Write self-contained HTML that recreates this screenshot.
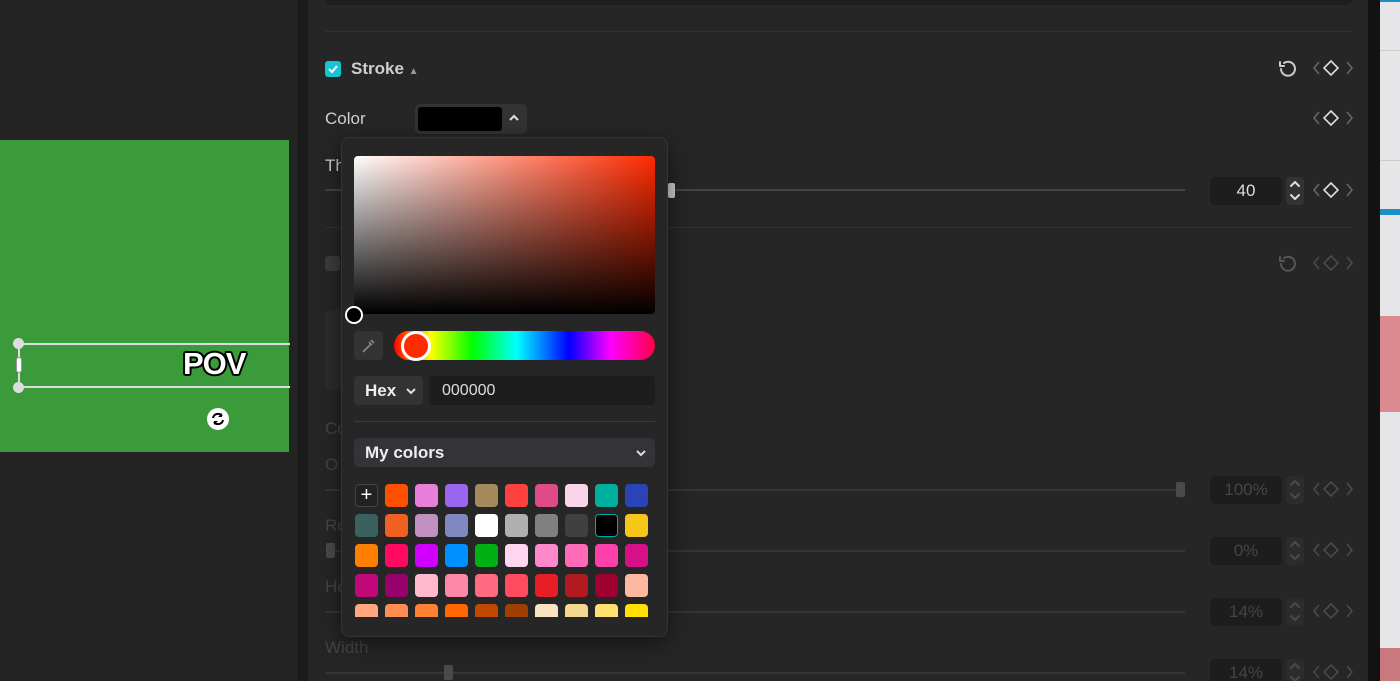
<!DOCTYPE html>
<html><head><meta charset="utf-8"><style>
*{margin:0;padding:0;box-sizing:border-box}
html{width:1400px;height:681px;overflow:hidden}
body{width:1400px;height:681px;overflow:hidden;background:#232323;font-family:"Liberation Sans",sans-serif;position:relative}
.a{position:absolute}
.t{color:#cfcfcf;font-size:17px}
.f{color:#454545;font-size:17px}
.inp{position:absolute;width:72px;height:28px;background:#1d1d1d;border-radius:5px;text-align:center;line-height:28px;font-size:17px}
.spin{position:absolute;width:18px;height:28px;background:#333;border-radius:4px}
.sw{position:absolute;width:23px;height:23px;border-radius:4px}
</style></head><body>
<div class="a" style="left:0;top:140px;width:289px;height:312px;background:#3b9a39"></div>
<div class="a" style="left:18px;top:343px;width:272px;height:2px;background:#ddd"></div>
<div class="a" style="left:18px;top:386px;width:272px;height:2px;background:#ddd"></div>
<div class="a" style="left:18px;top:344px;width:2px;height:43px;background:#ddd"></div>
<div class="a" style="left:13px;top:338px;width:11px;height:11px;border-radius:50%;background:#ddd"></div>
<div class="a" style="left:13px;top:382px;width:11px;height:11px;border-radius:50%;background:#ddd"></div>
<div class="a" style="left:16px;top:357px;width:6px;height:16px;border-radius:3px;background:#fff;border:1px solid #999"></div>
<div class="a" style="left:183px;top:346px;font-size:31px;font-weight:bold;color:#fff;letter-spacing:-1px;text-shadow:-2px 0 #000,2px 0 #000,0 -2px #000,0 2px #000,-1.5px -1.5px #000,1.5px 1.5px #000,-1.5px 1.5px #000,1.5px -1.5px #000">POV</div>
<div class="a" style="left:207px;top:408px;width:22px;height:22px;border-radius:50%;background:#fff"><svg width="22" height="22" viewBox="0 0 22 22"><path d="M6 10a5 5 0 0 1 9-2M16 12a5 5 0 0 1-9 2" stroke="#000" stroke-width="2" fill="none"/><path d="M15 5v4h-4zM7 17v-4h4z" fill="#000"/></svg></div>
<div class="a" style="left:298px;top:0;width:10px;height:681px;background:#1b1b1b"></div>
<div class="a" style="left:308px;top:0;width:1060px;height:681px;background:#262626"></div>
<div class="a" style="left:1368px;top:0;width:12px;height:681px;background:#121212"></div>
<div class="a" style="left:1380px;top:0;width:20px;height:681px;background:#e6e6e8"></div>
<div class="a" style="left:1380px;top:0;width:20px;height:2px;background:#1a8fc8"></div>
<div class="a" style="left:1380px;top:50px;width:20px;height:1px;background:#ccc"></div>
<div class="a" style="left:1380px;top:160px;width:20px;height:1px;background:#ccc"></div>
<div class="a" style="left:1380px;top:209px;width:20px;height:6px;background:#1a8fc8"></div>
<div class="a" style="left:1380px;top:316px;width:20px;height:96px;background:#dc8a90"></div>
<div class="a" style="left:1380px;top:648px;width:20px;height:33px;background:#c9787e"></div>
<div class="a" style="left:325px;top:0;width:1027px;height:5px;background:#1e1e1e;border-radius:0 0 6px 6px"></div>
<div class="a" style="left:325px;top:31px;width:1027px;height:1px;background:#323232"></div>
<div class="a" style="left:325px;top:61px;width:16px;height:16px;border-radius:3px;background:#16c4d4"><svg width="16" height="16"><path d="M4 8l3 3 5-6" stroke="#fff" stroke-width="2" fill="none"/></svg></div>
<div class="a t" style="left:351px;top:59px;font-weight:bold">Stroke <span style="font-size:10px;color:#999">▲</span></div>
<div class="a t" style="left:325px;top:109px">Color</div>
<div class="a" style="left:415px;top:104px;width:112px;height:30px;background:#333;border-radius:5px"></div>
<div class="a" style="left:418px;top:107px;width:84px;height:24px;background:#000;border-radius:3px"></div>
<svg class="a" style="left:508px;top:113px" width="12" height="10"><path d="M2 7l4-4 4 4" stroke="#ddd" stroke-width="2.2" fill="none"/></svg>
<div class="a t" style="left:325px;top:156px">Th</div>
<div class="a" style="left:325px;top:189px;width:860px;height:2px;background:#444"></div>
<div class="a" style="left:668px;top:183px;width:7px;height:15px;background:#ccc;border-radius:2px"></div>
<div class="inp" style="left:1210px;top:177px;color:#ddd">40</div>
<div class="spin" style="left:1286px;top:177px"></div>
<div class="a" style="left:325px;top:227px;width:1027px;height:1px;background:#323232"></div>
<div class="a" style="left:325px;top:256px;width:15px;height:15px;background:#3c3c3c;border-radius:3px"></div>
<div class="a" style="left:325px;top:310px;width:20px;height:80px;background:#2c2c2c;border-radius:6px"></div>
<div class="a f" style="left:325px;top:419px">Co</div>
<div class="a f" style="left:325px;top:455px">O</div>
<div class="a" style="left:325px;top:489px;width:860px;height:2px;background:#353535"></div>
<div class="a" style="left:1176px;top:482px;width:9px;height:15px;background:#4a4a4a;border-radius:2px"></div>
<div class="inp f" style="left:1210px;top:476px">100%</div><div class="spin" style="left:1286px;top:476px;background:#2c2c2c"></div>
<div class="a f" style="left:325px;top:516px">Ro</div>
<div class="a" style="left:325px;top:550px;width:860px;height:2px;background:#353535"></div>
<div class="a" style="left:326px;top:543px;width:9px;height:15px;background:#4a4a4a;border-radius:2px"></div>
<div class="inp f" style="left:1210px;top:537px">0%</div><div class="spin" style="left:1286px;top:537px;background:#2c2c2c"></div>
<div class="a f" style="left:325px;top:577px">He</div>
<div class="a" style="left:325px;top:611px;width:860px;height:2px;background:#353535"></div>
<div class="inp f" style="left:1210px;top:598px">14%</div><div class="spin" style="left:1286px;top:598px;background:#2c2c2c"></div>
<div class="a f" style="left:325px;top:638px">Width</div>
<div class="a" style="left:325px;top:672px;width:860px;height:2px;background:#353535"></div>
<div class="a" style="left:444px;top:665px;width:9px;height:15px;background:#4a4a4a;border-radius:2px"></div>
<div class="inp f" style="left:1210px;top:659px;height:22px;border-radius:5px 5px 0 0">14%</div><div class="spin" style="left:1286px;top:659px;height:22px;background:#2c2c2c"></div>
<svg class="a" style="left:0;top:0" width="1400" height="681">
<g fill="none" stroke-width="2" stroke-linecap="round" stroke-linejoin="round">
<g stroke="#ccc"><path d="M1281 69a7 7 0 1 0 3-6M1280 62v4h4"/></g>
<g stroke="#555"><path d="M1281 264a7 7 0 1 0 3-6M1280 257v4h4"/></g>
<g stroke="#ddd"><path d="M1299 186l-4-4-4 4M1299 195l-4 4-4-4"/></g>
<g stroke="#4a4a4a"><path d="M1299 485l-4-4-4 4M1299 494l-4 4-4-4M1299 546l-4-4-4 4M1299 555l-4 4-4-4M1299 607l-4-4-4 4M1299 616l-4 4-4-4M1299 668l-4-4-4 4M1299 677l-4 4-4-4"/></g>
</g>
<g fill="none" stroke-width="1.6"><path d="M1319 62l-5 6 5 6M1347 62l5 6-5 6" stroke="#666"/><path d="M1331 61l7 7-7 7-7-7z" stroke="#ddd"/></g>
<g fill="none" stroke-width="1.6"><path d="M1319 112l-5 6 5 6M1347 112l5 6-5 6" stroke="#666"/><path d="M1331 111l7 7-7 7-7-7z" stroke="#ddd"/></g>
<g fill="none" stroke-width="1.6"><path d="M1319 184l-5 6 5 6M1347 184l5 6-5 6" stroke="#666"/><path d="M1331 183l7 7-7 7-7-7z" stroke="#ddd"/></g>
<g fill="none" stroke-width="1.6" stroke="#4a4a4a"><path d="M1319 257l-5 6 5 6M1347 257l5 6-5 6M1331 256l7 7-7 7-7-7z"/>
<path d="M1319 483l-5 6 5 6M1347 483l5 6-5 6M1331 482l7 7-7 7-7-7z"/>
<path d="M1319 544l-5 6 5 6M1347 544l5 6-5 6M1331 543l7 7-7 7-7-7z"/>
<path d="M1319 605l-5 6 5 6M1347 605l5 6-5 6M1331 604l7 7-7 7-7-7z"/>
<path d="M1319 666l-5 6 5 6M1347 666l5 6-5 6M1331 665l7 7-7 7-7-7z"/></g>
</svg>
<div class="a" style="left:341px;top:137px;width:327px;height:500px;background:#262626;border:1px solid #333;border-radius:8px;box-shadow:0 6px 24px rgba(0,0,0,.5)"></div>
<div class="a" style="left:354px;top:156px;width:301px;height:158px;border-radius:4px;background:linear-gradient(to bottom,transparent,#000),linear-gradient(to right,#fff,#ff2a00)"></div>
<div class="a" style="left:345px;top:306px;width:18px;height:18px;border-radius:50%;background:#000;border:2.5px solid #fff"></div>
<div class="a" style="left:354px;top:331px;width:29px;height:29px;background:#333;border-radius:4px"><svg width="29" height="29"><path d="M9 21l8-8M15 11l3 3M17 9l3 3" stroke="#888" stroke-width="1.6" fill="none"/></svg></div>
<div class="a" style="left:394px;top:331px;width:261px;height:29px;border-radius:15px;background:linear-gradient(to right,#f00 0%,#ff0 14%,#0f0 30%,#0ff 47%,#00f 67%,#f0f 83%,#f04 100%)"></div>
<div class="a" style="left:401px;top:331px;width:30px;height:30px;border-radius:50%;background:#ff2a00;border:3px solid #fff"></div>
<div class="a" style="left:354px;top:376px;width:69px;height:29px;background:#333;border-radius:4px;color:#eee;font-weight:bold;font-size:17px;line-height:29px;padding-left:11px">Hex</div>
<svg class="a" style="left:405px;top:386px" width="12" height="10"><path d="M2 3l4 4 4-4" stroke="#ddd" stroke-width="2" fill="none"/></svg>
<div class="a" style="left:429px;top:376px;width:226px;height:29px;background:#1d1d1d;border-radius:4px;color:#ddd;font-size:16px;line-height:29px;padding-left:13px">000000</div>
<div class="a" style="left:354px;top:421px;width:301px;height:1px;background:#3a3a3a"></div>
<div class="a" style="left:354px;top:438px;width:301px;height:29px;background:#333338;border-radius:5px;color:#eee;font-weight:bold;font-size:17px;line-height:29px;padding-left:11px">My colors</div>
<svg class="a" style="left:635px;top:448px" width="12" height="10"><path d="M2 3l4 4 4-4" stroke="#ddd" stroke-width="2" fill="none"/></svg>
<div class="a" style="left:341px;top:484px;width:320px;height:133px;overflow:hidden">
<div class="sw" style="left:14px;top:0;background:#222;border:1px solid #444;color:#fff;font-size:20px;text-align:center;line-height:20px">+</div>
<div class="sw" style="left:44px;top:0;background:#ff5000"></div><div class="sw" style="left:74px;top:0;background:#e87fd8"></div><div class="sw" style="left:104px;top:0;background:#9966ee"></div><div class="sw" style="left:134px;top:0;background:#a58a5c"></div><div class="sw" style="left:164px;top:0;background:#ff4040"></div><div class="sw" style="left:194px;top:0;background:#e04a88"></div><div class="sw" style="left:224px;top:0;background:#f8d5e8"></div><div class="sw" style="left:254px;top:0;background:#00b09e"></div><div class="sw" style="left:284px;top:0;background:#2a44b8"></div>
<div class="sw" style="left:14px;top:30px;background:#3a6060"></div><div class="sw" style="left:44px;top:30px;background:#f06020"></div><div class="sw" style="left:74px;top:30px;background:#c090c0"></div><div class="sw" style="left:104px;top:30px;background:#7f88bf"></div><div class="sw" style="left:134px;top:30px;background:#fff"></div><div class="sw" style="left:164px;top:30px;background:#b0b0b0"></div><div class="sw" style="left:194px;top:30px;background:#808080"></div><div class="sw" style="left:224px;top:30px;background:#404040"></div><div class="sw" style="left:254px;top:30px;background:#000;border:1.5px solid #0aa"></div><div class="sw" style="left:284px;top:30px;background:#f5c518"></div>
<div class="sw" style="left:14px;top:60px;background:#ff8000"></div><div class="sw" style="left:44px;top:60px;background:#ff0a60"></div><div class="sw" style="left:74px;top:60px;background:#d000ff"></div><div class="sw" style="left:104px;top:60px;background:#0090ff"></div><div class="sw" style="left:134px;top:60px;background:#00b015"></div><div class="sw" style="left:164px;top:60px;background:#ffd5f0"></div><div class="sw" style="left:194px;top:60px;background:#ff88cc"></div><div class="sw" style="left:224px;top:60px;background:#ff6ab8"></div><div class="sw" style="left:254px;top:60px;background:#ff40a8"></div><div class="sw" style="left:284px;top:60px;background:#d81088"></div>
<div class="sw" style="left:14px;top:90px;background:#c0087a"></div><div class="sw" style="left:44px;top:90px;background:#98006a"></div><div class="sw" style="left:74px;top:90px;background:#ffb8cc"></div><div class="sw" style="left:104px;top:90px;background:#ff88aa"></div><div class="sw" style="left:134px;top:90px;background:#ff6a80"></div><div class="sw" style="left:164px;top:90px;background:#ff4a60"></div><div class="sw" style="left:194px;top:90px;background:#e81e24"></div><div class="sw" style="left:224px;top:90px;background:#b01a20"></div><div class="sw" style="left:254px;top:90px;background:#a00030"></div><div class="sw" style="left:284px;top:90px;background:#ffb8a0"></div>
<div class="sw" style="left:14px;top:120px;background:#ffa880"></div><div class="sw" style="left:44px;top:120px;background:#ff8c50"></div><div class="sw" style="left:74px;top:120px;background:#ff8030"></div><div class="sw" style="left:104px;top:120px;background:#ff6800"></div><div class="sw" style="left:134px;top:120px;background:#c04800"></div><div class="sw" style="left:164px;top:120px;background:#a04000"></div><div class="sw" style="left:194px;top:120px;background:#f8e4c0"></div><div class="sw" style="left:224px;top:120px;background:#f5d890"></div><div class="sw" style="left:254px;top:120px;background:#ffe070"></div><div class="sw" style="left:284px;top:120px;background:#ffe000"></div>
</div>
</body></html>
